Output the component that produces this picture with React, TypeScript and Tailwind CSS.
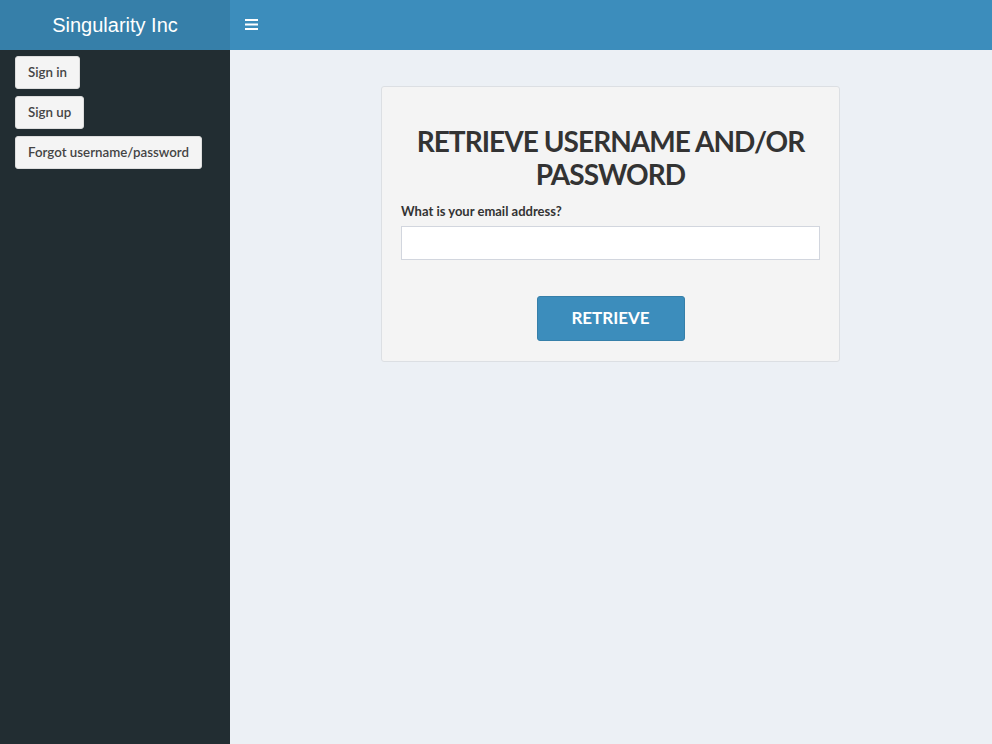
import React from "react";

export default function App() {
  const font = { fontFamily: "Lato, 'Noto Sans', sans-serif" };
  return (
    <div className="w-[992px] h-[744px] flex flex-col bg-[#ecf0f5]" style={font}>
      <div className="flex h-[50px] shrink-0">
        <div className="w-[230px] bg-[#367fa9] flex items-center justify-center text-white text-[20px]" style={{ fontFamily: "'Liberation Sans', Arial, sans-serif" }}>
          Singularity Inc
        </div>
        <div className="flex-1 bg-[#3c8dbc] flex items-center pl-[15px]">
          <svg width="13" height="11" viewBox="0 0 13 11" className="mt-[-1px]">
            <rect x="0" y="0" width="13" height="2" fill="white" />
            <rect x="0" y="4.5" width="13" height="2" fill="white" />
            <rect x="0" y="9" width="13" height="2" fill="white" />
          </svg>
        </div>
      </div>
      <div className="flex flex-1">
        <div className="w-[230px] bg-[#222d32] flex flex-col items-start gap-[7px] pt-[6px] pl-[15px]">
          {["Sign in", "Sign up", "Forgot username/password"].map((t) => (
            <button key={t} className="h-[33px] px-[12px] bg-[#f4f4f4] border border-[#ddd] rounded-[3px] text-[13.3px] font-semibold text-[#444]">
              {t}
            </button>
          ))}
        </div>
        <div className="flex-1 flex justify-center items-start pt-[36px]">
          <div className="w-[459px] h-[276px] ml-[-1px] bg-[#f4f4f4] border border-[#dcdfe3] rounded-[3px] px-[19px] pt-[38px] flex flex-col">
            <h1 className="text-center text-[28px] leading-[33px] font-bold text-[#333] tracking-[-0.95px]">
              RETRIEVE USERNAME AND/OR PASSWORD
            </h1>
            <label className="mt-[11px] text-[13px] font-bold text-[#333]">What is your email address?</label>
            <input className="mt-[4px] h-[34px] bg-white border border-[#d2d6de] outline-none" />
            <div className="flex justify-center mt-[36px]">
              <button className="w-[148px] h-[45px] bg-[#3c8dbc] border border-[#367fa9] rounded-[3px] text-white text-[17px] font-bold">
                RETRIEVE
              </button>
            </div>
          </div>
        </div>
      </div>
    </div>
  );
}
